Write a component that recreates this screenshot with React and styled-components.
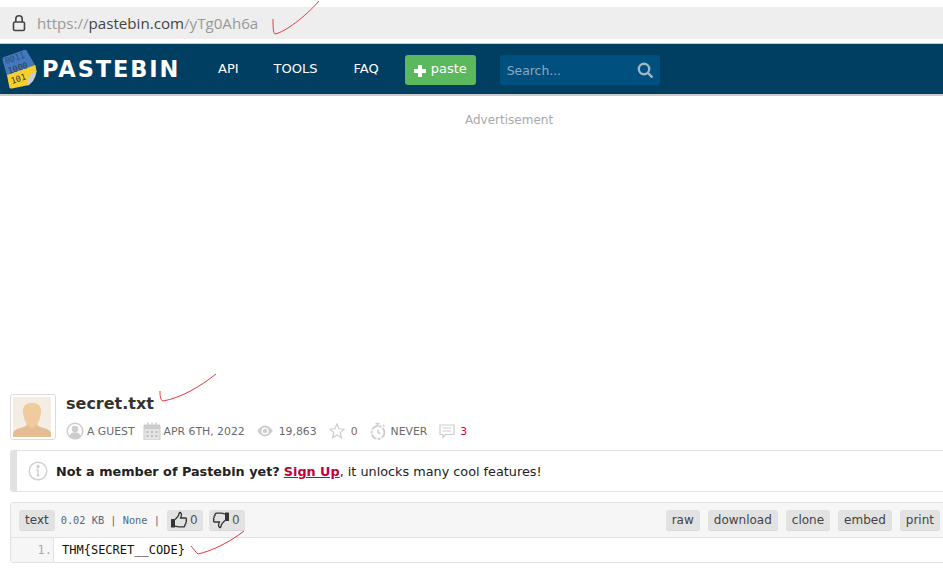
import React from 'react';
import styled, { createGlobalStyle } from 'styled-components';

const GlobalStyle = createGlobalStyle`
  html, body {
    margin: 0;
    padding: 0;
    background: #fff;
    overflow: hidden;
    font-family: "DejaVu Sans", sans-serif;
  }
`;

const Page = styled.div`
  position: relative;
  width: 943px;
  height: 587px;
  overflow: hidden;
  background: #fff;
`;

const UrlBar = styled.div`
  display: flex;
  align-items: center;
  height: 32px;
  margin-top: 7px;
  margin-bottom: 4px;
  padding-left: 12px;
  background: #eeeeee;
  font-family: "Open Sans", sans-serif;
  font-size: 15.13px;
  color: #999;
`;

const LockIcon = styled.svg`
  width: 14px;
  height: 18px;
  margin-right: 11px;
`;

const Host = styled.span`
  color: #444;
`;

const Nav = styled.header`
  display: flex;
  align-items: center;
  height: 50px;
  background: #003e62;
  border-top: 1px solid #c4c8cb;
  border-bottom: 2px solid #c9cbcc;
  box-sizing: content-box;
`;

const Logo = styled.svg`
  width: 38px;
  height: 44px;
  margin-right: 4px;
  margin-bottom: 1px;
  flex-shrink: 0;
`;

const Brand = styled.div`
  width: 176px;
  font-size: 22.5px;
  font-weight: 700;
  letter-spacing: 1.9px;
  color: #fff;
`;

const NavLink = styled.a`
  margin-right: ${(p) => p.$gap}px;
  margin-bottom: 2px;
  font-size: 13px;
  color: #fff;
`;

const PasteButton = styled.div`
  display: flex;
  align-items: center;
  gap: 4px;
  box-sizing: border-box;
  width: 71px;
  height: 30px;
  margin-top: 2px;
  margin-right: 24px;
  padding: 0 0 3px 8px;
  border-radius: 3px;
  background: #5cb85c;
  font-size: 13px;
  color: #fff;
`;

const Search = styled.div`
  display: flex;
  align-items: center;
  justify-content: space-between;
  box-sizing: border-box;
  width: 160px;
  height: 30px;
  margin-top: 2px;
  padding: 0 6px 0 7px;
  border-radius: 3px;
  background: #00507f;
  font-size: 12.4px;
  color: #8aa9bd;
`;

const AdSlot = styled.div`
  height: 298px;
  padding-top: 16px;
  box-sizing: border-box;
  padding-left: 465px;
  font-size: 12px;
  line-height: 16px;
  color: #aaa;
`;

const Content = styled.main`
  display: flex;
  flex-direction: column;
  width: 940px;
  margin-left: 10px;
`;

const PasteHead = styled.section`
  display: flex;
  gap: 10px;
  height: 46px;
`;

const Avatar = styled.div`
  box-sizing: border-box;
  width: 46px;
  height: 46px;
  padding: 2px;
  border: 1px solid #dcdcdc;
  border-radius: 3px;
`;

const Title = styled.h1`
  margin: 0 0 9px;
  font-size: 16px;
  line-height: 19px;
  font-weight: 700;
  color: #333;
`;

const Meta = styled.div`
  display: flex;
  align-items: center;
  height: 18px;
  font-size: 10.85px;
  color: #6b6b6b;
`;

const MetaItem = styled.span`
  display: flex;
  align-items: center;
  gap: ${(p) => p.$gap ?? 5}px;
  margin-right: ${(p) => p.$right ?? 12}px;
  color: #6b6b6b;
`;

const MetaCount = styled.span`
  color: ${(p) => p.$color || 'inherit'};
`;

const Notice = styled.section`
  display: flex;
  align-items: center;
  gap: 8px;
  box-sizing: border-box;
  height: 42px;
  margin-top: 10px;
  padding-left: 11px;
  border: 1px solid #e2e2e2;
  border-left: 7px solid #e2e2e2;
  border-radius: 3px;
  font-size: 12.8px;
  color: #222;
`;

const SignUp = styled.a`
  font-weight: 700;
  color: #c0003c;
  text-decoration: underline;
`;

const CodeFrame = styled.section`
  box-sizing: border-box;
  height: 61px;
  margin-top: 10px;
  border: 1px solid #e2e2e2;
  border-radius: 3px;
`;

const CodeBar = styled.div`
  display: flex;
  align-items: center;
  box-sizing: border-box;
  height: 35px;
  padding: 0 9px 0 8px;
  background: #f6f6f6;
  border-bottom: 1px solid #e2e2e2;
`;

const Chip = styled.span`
  display: flex;
  align-items: center;
  gap: 4px;
  box-sizing: border-box;
  height: 20px;
  margin-left: ${(p) => p.$left ?? 0}px;
  padding: 0 6px;
  border-radius: 3px;
  background: #e2e2e2;
  box-shadow: 0 1px 0 #d8d8d8;
  font-size: 12px;
  color: #444;
`;

const VoteChip = styled(Chip)`
  width: 36px;
  padding: 0 0 0 3px;
  gap: 2px;
  color: #555;
`;

const Info = styled.span`
  margin: 0 7px 0 6px;
  font-family: "DejaVu Sans Mono", monospace;
  font-size: 10.3px;
  white-space: pre;
  color: #55697a;
`;

const Spacer = styled.div`
  flex: 1;
`;

const CodeRow = styled.div`
  display: flex;
  height: 24px;
`;

const Gutter = styled.div`
  box-sizing: border-box;
  width: 43px;
  padding: 5px 1px 0 0;
  text-align: right;
  background: #f6f6f6;
  border-right: 1px solid #e2e2e2;
  font-family: "DejaVu Sans Mono", monospace;
  font-size: 12px;
  line-height: 14px;
  color: #aaa;
`;

const Code = styled.div`
  padding: 5px 0 0 8px;
  font-family: "DejaVu Sans Mono", monospace;
  font-size: 12px;
  line-height: 14px;
  color: #111;
`;

const Ticks = styled.svg`
  position: absolute;
  left: 0;
  top: 0;
  width: 943px;
  height: 587px;
  pointer-events: none;
`;

const Grey = ({ children, w = 18, h = 18, vb = '0 0 18 18' }) => (
  <svg width={w} height={h} viewBox={vb} fill="none" stroke="#cdcdcd" strokeWidth="1.5">
    {children}
  </svg>
);

const ThumbUp = ({ flip }) => (
  <svg width="18" height="18" viewBox="0 0 18 18" fill="none" style={flip ? { transform: 'scale(-1,-1)' } : undefined}>
    <rect x="1" y="8" width="4" height="8.5" fill="#333" rx="0.5" />
    <path d="M5 8.5 8 5.500 9.500 1.500c1.600 0 2.200 1.400 1.800 3L10.600 7h4.600c1.300 0 1.600 1.400.9 2.200.6.8.5 1.800-.3 2.300.3.9 0 1.700-.8 2.100.2 1.300-.5 2.300-1.800 2.300H8.500c-1.400 0-2.200-.5-3.500-.8" stroke="#333" strokeWidth="1.300" />
  </svg>
);

const App = () => {
  return (
    <Page>
      <GlobalStyle />
      <UrlBar>
        <LockIcon viewBox="0 0 14 18" fill="none" stroke="#444" strokeWidth="1.6">
          <path d="M3.800 8V5a3.200 3.200 0 0 1 6.400 0v3" />
          <rect x="1.500" y="8" width="11" height="8.500" rx="1.500" />
        </LockIcon>
        <span>https://<Host>pastebin.com</Host>/yTg0Ah6a</span>
      </UrlBar>

      <Nav>
        <Logo viewBox="0 0 38 44">
          <path d="M4 10 24 3c1.500-.5 2.500 0 3 1.200L35.500 19 7 29 2.500 13c-.3-1.300.3-2.500 1.500-3z" fill="#4478bd" />
          <path d="M7 28 35.500 18l1 6.500L29 38l-17 3.500c-1.500.3-2.300-.2-2.700-1.500z" fill="#f6cf2c" />
          <path d="M27.500 38.500c-1-5 2-11.500 9-14.500-.5 6-3.500 12-9 14.500z" fill="#c9cdd0" />
          <text x="6" y="17" fontFamily="DejaVu Sans Mono, monospace" fontSize="8.500" fill="#2b4f80" transform="rotate(-18 6 17)">0011</text>
          <text x="9" y="27" fontFamily="DejaVu Sans Mono, monospace" fontSize="8.500" fill="#2c3c50" transform="rotate(-18 9 27)">1000</text>
          <text x="12" y="37" fontFamily="DejaVu Sans Mono, monospace" fontSize="8.500" fill="#3b3a20" transform="rotate(-18 12 37)">101</text>
        </Logo>
        <Brand>PASTEBIN</Brand>
        <NavLink $gap={35}>API</NavLink>
        <NavLink $gap={36}>TOOLS</NavLink>
        <NavLink $gap={26}>FAQ</NavLink>
        <PasteButton>
          <svg width="14" height="14" viewBox="0 0 14 14" style={{ marginTop: 5 }}>
            <path d="M5 1h4v4h4v4H9v4H5V9H1V5h4z" fill="#fff" />
          </svg>
          paste
        </PasteButton>
        <Search>
          Search...
          <svg width="17" height="17" viewBox="0 0 17 17" fill="none" stroke="#9db6c6" strokeWidth="2.400">
            <circle cx="7" cy="7" r="5.200" />
            <path d="M10.800 10.800 15.500 15.500" />
          </svg>
        </Search>
      </Nav>

      <AdSlot>Advertisement</AdSlot>

      <Content>
        <PasteHead>
          <Avatar>
            <svg width="38" height="40" viewBox="0 0 38 40" style={{ display: 'block' }}>
              <rect width="38" height="40" fill="#f4ede3" />
              <path d="M0 40v-4c1-4 8-5 13-7l1-3h10l1 3c5 2 12 3 13 7v4z" fill="#e5bd92" />
              <path d="M19 6c6 0 9 2.500 9 8 0 7-4 17-9 17s-9-10-9-17c0-5.500 3-8 9-8z" fill="#f0cb9e" />
            </svg>
          </Avatar>
          <div>
            <Title>secret.txt</Title>
            <Meta>
              <MetaItem $gap={3} $right={8}>
                <Grey>
                  <circle cx="9" cy="9" r="7.800" />
                  <circle cx="9" cy="7" r="3.200" fill="#cdcdcd" stroke="none" />
                  <path d="M3.200 14.500c.8-3.500 3.300-4.300 5.800-4.300s5 .8 5.800 4.300C13 16.200 11 17 9 17s-4-.8-5.800-2.500z" fill="#cdcdcd" stroke="none" />
                </Grey>
                A GUEST
              </MetaItem>
              <MetaItem $gap={3}>
                <Grey>
                  <path d="M1 3h16v15H1z" fill="#e4e4e4" strokeWidth="1" />
                  <path d="M1 3h16v4H1z" fill="#cdcdcd" stroke="none" />
                  <path d="M5 .5v4M9 .5v4M13 .5v4" strokeWidth="1.600" />
                  <path d="M3.500 10h2M8 10h2M12.500 10h2M3.500 14h2M8 14h2M12.500 14h2" strokeWidth="2" stroke="#bdbdbd" />
                </Grey>
                APR 6TH, 2022
              </MetaItem>
              <MetaItem $gap={6}>
                <svg width="16" height="12" viewBox="0 0 16 12">
                  <path d="M.2 6C3 2 5.500.6 8 .6S13 2 15.800 6C13 10 10.500 11.400 8 11.400S3 10 .2 6z" fill="#cdcdcd" />
                  <circle cx="8" cy="6" r="3.600" fill="#fff" />
                  <circle cx="8" cy="6" r="2.200" fill="#cdcdcd" />
                </svg>
                19,863
              </MetaItem>
              <MetaItem $gap={6}>
                <Grey w={16} h={16} vb="0 0 16 16">
                  <path d="M8 1l2 4.800 5.200.4-4 3.400 1.300 5.100L8 12l-4.500 2.700 1.300-5.100-4-3.400L6 5.800z" strokeWidth="1.200" />
                </Grey>
                <MetaCount $color="#8a6d4a">0</MetaCount>
              </MetaItem>
              <MetaItem>
                <Grey w={16} h={18} vb="0 0 16 18">
                  <circle cx="8" cy="10.500" r="6.400" strokeDasharray="6 1.200 3 1.200" strokeWidth="1.800" />
                  <path d="M5.500 1.500h4M7.500 1.500v3M13 3l1.500 1.500M8 7.500v3l2.500 1" />
                </Grey>
                NEVER
              </MetaItem>
              <MetaItem>
                <Grey w={16} h={16} vb="0 0 16 16">
                  <path d="M1 2h14v9.500H6.500L4 14.500v-3H1z" strokeWidth="1.200" />
                  <path d="M3.500 5h9M3.500 8h9" strokeWidth="1" />
                </Grey>
                <MetaCount $color="#d0003c">3</MetaCount>
              </MetaItem>
            </Meta>
          </div>
        </PasteHead>

        <Notice>
          <svg width="20" height="20" viewBox="0 0 20 20" fill="none" stroke="#d0d0d0" strokeWidth="1.500">
            <circle cx="10" cy="10" r="8.800" />
            <path d="M10 8.500v6M8.500 14.500h3M8.500 8.500H10" />
            <circle cx="10" cy="5.500" r="1" fill="#d0d0d0" />
          </svg>
          <span><b>Not a member of Pastebin yet?</b> <SignUp>Sign Up</SignUp>, it unlocks many cool features!</span>
        </Notice>

        <CodeFrame>
          <CodeBar>
            <Chip>text</Chip>
            <Info>0.02 KB | None |</Info>
            <VoteChip><ThumbUp />0</VoteChip>
            <VoteChip $left={6}><ThumbUp flip />0</VoteChip>
            <Spacer />
            <Chip>raw</Chip>
            <Chip $left={8}>download</Chip>
            <Chip $left={8}>clone</Chip>
            <Chip $left={8}>embed</Chip>
            <Chip $left={8}>print</Chip>
          </CodeBar>
          <CodeRow>
            <Gutter>1.</Gutter>
            <Code>THM{'{'}SECRET__CODE{'}'}</Code>
          </CodeRow>
        </CodeFrame>
      </Content>

      <Ticks viewBox="0 0 943 587" fill="none" stroke="#e2383f" strokeWidth="1">
        <path d="M273 19c0 7 0 14 2 15 10-2 30-17 44-33" />
        <path d="M160 391c0 4 0 9 3 10 18-3 38-15 53-27" />
        <path d="M191 546c3 3 5 7 7 8 14-3 32-12 46-23" />
      </Ticks>
    </Page>
  );
};

export default App;
